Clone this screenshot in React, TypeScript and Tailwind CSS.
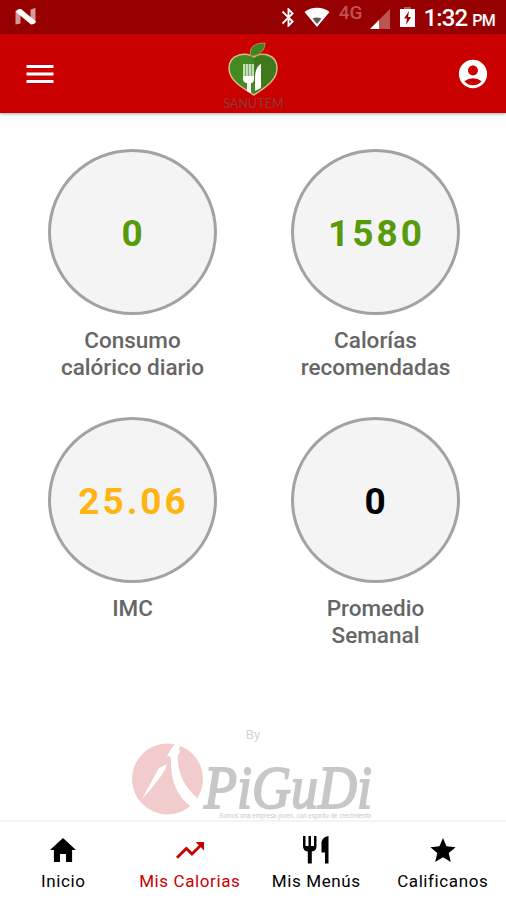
import React from 'react';
import { MdMenu, MdAccountCircle, MdBluetooth } from 'react-icons/md';
import { IoMdHome, IoMdTrendingUp, IoMdStar } from 'react-icons/io';

const StatusBar: React.FC = () => (
  <div className="h-[34px] shrink-0 bg-[#970000] flex items-center justify-between pl-[15px] pr-[11px] text-white">
    <svg width="22" height="18" viewBox="0 0 22 18">
      <path d="M.5 3l5-2v14.500l-5 1zM15.500 1.500l5-1.500v15l-5-3z" fill="#fff" opacity=".6" />
      <path d="M1 4Q2 .5 6 1l15 12.500q-1 3-5 3z" fill="#fff" />
    </svg>
    <div className="flex items-center">
      <MdBluetooth size={23} className="mr-[4px]" />
      <svg width="26" height="20" viewBox="0 0 26 20" className="mr-[9px]">
        <path d="M.5 5C7-.7 19-.7 25.500 5L13 20z" fill="#fff" />
        <path d="M8.500 11.500q4.500-2 9 0L13 17z" fill="#5b5a5c" />
      </svg>
      <span className="text-[19px] font-medium leading-none text-[#c35252] mr-[6px] mb-[9px]">4G</span>
      <svg width="22" height="20" viewBox="0 0 22 20" className="mr-[9px] mt-[3px]">
        <path d="M21 0v20H1z" fill="#bd5353" />
        <path d="M10 11v9H1z" fill="#fff" />
      </svg>
      <svg width="15" height="20" viewBox="0 0 15 20" className="mr-[9px]">
        <path d="M4 0h7v2H4z" fill="#c35252" />
        <path d="M0 2h15v18H0z" fill="#fff" />
        <path d="M9 4L4 11.500h3L6 18l5-8H8z" fill="#970000" />
      </svg>
      <span className="text-[24px] font-medium leading-none tracking-[-0.9px] mt-[2px]">1:32</span>
      <span className="text-[16px] font-medium leading-none ml-[5px] mt-[7px] tracking-[-0.7px]">PM</span>
    </div>
  </div>
);

const AppleLogo: React.FC = () => (
  <svg width="66" height="70" viewBox="0 0 66 70">
    <path d="M34 15C28 10 9 11 9 26c0 13 14 20 25 27C44 46 57 39 57 26c0-15-17-16-23-11z" fill="#438b20" stroke="#d9b68d" strokeWidth="1.500" />
    <path d="M31 14c-3-9 4-13 14-13 0 7-5 13-14 13z" fill="#3b8820" stroke="#c98258" strokeWidth="1" />
    <path d="M34 16c8-4 22-1 22 10 0 12-11 18-21 25z" fill="#40791b" />
    <path d="M23 22v15q0 4 4 4v8l4 2V41q3 0 3-4V22z" fill="#c6dcb7" />
    <path d="M23 34h11q0 7-3 7v10l-4-2V41q-4 0-4-7zM35 49V36c0-8 3-13 6-14v24z" fill="#fff" />
    <path d="M25.500 22v12M28.500 22v12M31.500 22v12" stroke="#6c9f55" strokeWidth=".8" />
    <text x="33.500" y="66" textAnchor="middle" textLength="60" lengthAdjust="spacingAndGlyphs" fontSize="13" fontFamily="Lato, sans-serif" fill="#8e3835">SANUTEM</text>
  </svg>
);

const Header: React.FC = () => (
  <header className="h-[79px] shrink-0 bg-[#ca0000] flex items-center justify-between pl-[22px] pr-[16px] text-white shadow-[0_1px_3px_rgba(0,0,0,0.35)]">
    <MdMenu size={36} />
    <div className="self-end pb-px pr-[8px]"><AppleLogo /></div>
    <MdAccountCircle size={34} />
  </header>
);

type StatProps = { value: string; color: string; label: React.ReactNode };

const Stat: React.FC<StatProps> = ({ value, color, label }) => (
  <div className="flex flex-col items-center h-[268px]">
    <div className="w-[169px] h-[166px] shrink-0 rounded-[50%] border-3 border-[#a2a2a2] bg-[#f4f4f4] flex items-center justify-center pt-[3px]">
      <span className={`text-[37px] font-bold leading-none tracking-[3px] -mr-[2px] ${color}`}>{value}</span>
    </div>
    <p className="mt-[12px] text-center text-[22.500px] leading-[26.500px] font-medium text-[#666]">{label}</p>
  </div>
);

const MenuIcon: React.FC = () => (
  <svg width="28" height="30" viewBox="0 0 28 30" fill="currentColor">
    <path d="M1 1h2.500v10h3V1h2.500v10h3V1H14.500v10q0 5-4.700 5.500v12h-4v-12Q1 16 1 11zM26.500 1v27.500h-3.500V17.500H19.500V7q1-5 7-6z" />
  </svg>
);

type TabProps = { icon: React.ReactNode; label: string; active?: boolean };

const Tab: React.FC<TabProps> = ({ icon, label, active }) => (
  <div className={`flex flex-col items-center ${active ? 'text-[#c90000]' : 'text-black'}`}>
    <div className="h-[30px] mt-[13px] flex items-center">{icon}</div>
    <span className="mt-[6px] text-[17px] leading-[20px] tracking-[0.6px] whitespace-nowrap">{label}</span>
  </div>
);

const Sponsor: React.FC = () => (
  <div className="flex flex-col items-center">
    <span className="text-[13px] leading-[16px] text-[#d3d3d3]">By</span>
    <svg width="246" height="77" viewBox="0 0 246 77">
      <circle cx="37.500" cy="36" r="35.500" fill="#f2cccc" />
      <path d="M37 13l4-7 4-5 5 2-1 3 1 3-2 3C47 27 52 41 67 55l-4 10C46 53 41 38 41 17l-1-4zM29 25l8-4-2 6Q26 41 12 56z" fill="#fff" />
      <text x="74" y="64.500" fontSize="62" textLength="168" lengthAdjust="spacingAndGlyphs" fontStyle="italic" fontFamily="Liberation Serif, serif" fill="#c7c7c7" stroke="#c7c7c7" strokeWidth="2">PiGuDi</text>
      <text x="89" y="74.500" fontSize="7" textLength="152" lengthAdjust="spacingAndGlyphs" fontFamily="Liberation Sans, sans-serif" fill="#c9c9c9">Somos una empresa joven, con espíritu de crecimiento</text>
    </svg>
  </div>
);

export default function App() {
  return (
    <div className="w-[506px] h-[900px] overflow-hidden bg-white flex flex-col font-[Roboto,sans-serif]">
      <StatusBar />
      <Header />
      <main className="flex-1 flex flex-col">
        <div className="grid grid-cols-2 pl-[11px] pr-[9px] pt-[36px]">
          <Stat value="0" color="text-[#579a0a]" label={<>Consumo<br />calórico diario</>} />
          <Stat value="1580" color="text-[#579a0a]" label={<>Calorías<br />recomendadas</>} />
          <Stat value="25.06" color="text-[#ffb511]" label="IMC" />
          <Stat value="0" color="text-black" label={<>Promedio<br />Semanal</>} />
        </div>
        <div className="mt-[42px]"><Sponsor /></div>
      </main>
      <nav className="h-[80px] shrink-0 grid grid-cols-4 border-t-2 border-[#f4f4f4] bg-white">
        <Tab icon={<IoMdHome size={32} />} label="Inicio" />
        <Tab icon={<IoMdTrendingUp size={32} />} label="Mis Calorias" active />
        <Tab icon={<MenuIcon />} label="Mis Menús" />
        <Tab icon={<IoMdStar size={32} />} label="Calificanos" />
      </nav>
    </div>
  );
}
